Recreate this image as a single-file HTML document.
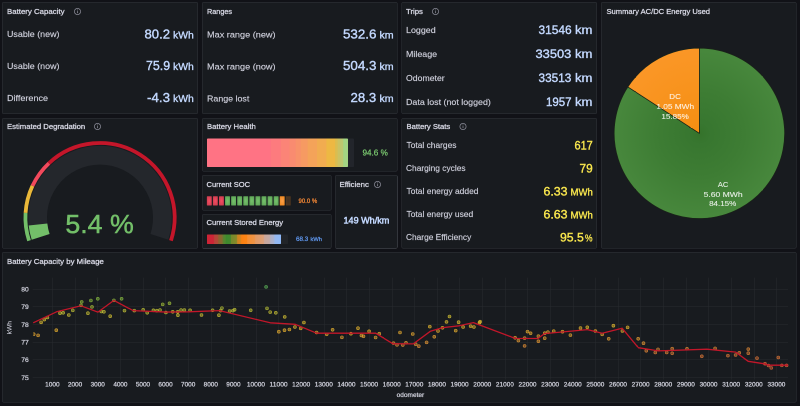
<!DOCTYPE html>
<html lang="en">
<head>
<meta charset="utf-8">
<title>Battery Health Dashboard</title>
<style>
*{box-sizing:border-box;margin:0;padding:0}
html,body{width:800px;height:406px;overflow:hidden;background:#111217}
body{position:relative;font-family:"Liberation Sans", sans-serif}
#stage{position:absolute;left:0;top:0;width:1600px;height:812px;overflow:hidden;transform:scale(0.5);transform-origin:0 0;will-change:transform}
main{position:absolute;left:0;top:0;width:800px;height:406px;zoom:2}
@supports not (zoom:2){main{transform:scale(2);transform-origin:0 0}}
.panel{position:absolute;background:#181b1f;border:0.5px solid #33363c;border-radius:1.5px}
.abs{position:absolute;display:block}
.t{position:absolute;white-space:nowrap;line-height:normal;font-weight:400;transform-origin:0 0;display:block}
.title{-webkit-text-stroke:0.32px currentColor}
.lab{-webkit-text-stroke:0.15px currentColor}
.val{-webkit-text-stroke:0.4px currentColor}
.val2{-webkit-text-stroke:0.5px currentColor}
.bv{-webkit-text-stroke:0.25px currentColor}
.unit{-webkit-text-stroke:0.35px currentColor}
.lcd i{position:absolute;top:196.4px;width:5px;height:9.4px;border-radius:0.5px;display:block}
svg text{font-family:"Liberation Sans", sans-serif}
</style>
</head>
<body>
<div id="stage">
<main>
<section class="panel" style="left:2px;top:2px;width:196px;height:112px"></section>
<h2 class="t title" style="left:7.02px;top:7.0px;font-size:7.7px;color:#d4d5e1;transform:scaleX(1.019)">Battery Capacity</h2>
<svg class="abs" style="left:72.30px;top:6.60px" width="10" height="10" viewBox="0 0 10 10"><circle cx="5" cy="5" r="3.1" fill="none" stroke="#888995" stroke-width="0.75"/><path d="M5 4.6V6.6" stroke="#888995" stroke-width="0.8" fill="none"/><circle cx="5" cy="3.5" r="0.45" fill="#888995"/></svg>

<span class="t lab" style="left:7.08px;top:29.0px;font-size:8.6px;color:#cfd0dc;transform:scaleX(1.037)">Usable (new)</span>

<span class="t val" style="left:144.46px;top:26.5px;font-size:13px;color:#c3d8fe;transform:scaleX(1.010)">80.2</span>

<span class="t unit" style="left:172.88px;top:29.0px;font-size:10.4px;color:#c3d8fe;transform:scaleX(0.998)">kWh</span>

<span class="t lab" style="left:7.08px;top:61.0px;font-size:8.6px;color:#cfd0dc;transform:scaleX(1.037)">Usable (now)</span>

<span class="t val" style="left:145.83px;top:58.0px;font-size:13px;color:#c3d8fe;transform:scaleX(0.952)">75.9</span>

<span class="t unit" style="left:172.88px;top:60.5px;font-size:10.4px;color:#c3d8fe;transform:scaleX(0.998)">kWh</span>

<span class="t lab" style="left:7.03px;top:93.0px;font-size:8.6px;color:#cfd0dc;transform:scaleX(1.051)">Difference</span>

<span class="t val" style="left:146.95px;top:90.0px;font-size:13px;color:#c3d8fe;transform:scaleX(1.026)">-4.3</span>

<span class="t unit" style="left:172.88px;top:92.5px;font-size:10.4px;color:#c3d8fe;transform:scaleX(0.998)">kWh</span>

<section class="panel" style="left:202px;top:2px;width:195.5px;height:112px"></section>
<h2 class="t title" style="left:207.07px;top:7.0px;font-size:7.7px;color:#d4d5e1;transform:scaleX(0.944)">Ranges</h2>

<span class="t lab" style="left:206.82px;top:29.5px;font-size:8.6px;color:#cfd0dc;transform:scaleX(1.063)">Max range (new)</span>

<span class="t val" style="left:342.82px;top:26.5px;font-size:13px;color:#c3d8fe;transform:scaleX(1.027)">532.6</span>

<span class="t unit" style="left:379.46px;top:29.5px;font-size:10.2px;color:#c3d8fe;transform:scaleX(1.041)">km</span>

<span class="t lab" style="left:206.82px;top:61.5px;font-size:8.6px;color:#cfd0dc;transform:scaleX(1.063)">Max range (now)</span>

<span class="t val" style="left:342.82px;top:58.0px;font-size:13px;color:#c3d8fe;transform:scaleX(1.027)">504.3</span>

<span class="t unit" style="left:379.46px;top:61.0px;font-size:10.2px;color:#c3d8fe;transform:scaleX(1.041)">km</span>

<span class="t lab" style="left:206.84px;top:93.5px;font-size:8.6px;color:#cfd0dc;transform:scaleX(1.030)">Range lost</span>

<span class="t val" style="left:350.49px;top:90.0px;font-size:13px;color:#c3d8fe;transform:scaleX(1.016)">28.3</span>

<span class="t unit" style="left:379.46px;top:93.0px;font-size:10.2px;color:#c3d8fe;transform:scaleX(1.041)">km</span>

<section class="panel" style="left:401.5px;top:2px;width:195.5px;height:112px"></section>
<h2 class="t title" style="left:406.20px;top:7.0px;font-size:7.7px;color:#d4d5e1;transform:scaleX(1.006)">Trips</h2>
<svg class="abs" style="left:430.70px;top:6.60px" width="10" height="10" viewBox="0 0 10 10"><circle cx="5" cy="5" r="3.1" fill="none" stroke="#888995" stroke-width="0.75"/><path d="M5 4.6V6.6" stroke="#888995" stroke-width="0.8" fill="none"/><circle cx="5" cy="3.5" r="0.45" fill="#888995"/></svg>

<span class="t lab" style="left:406.14px;top:25.0px;font-size:8.6px;color:#cfd0dc;transform:scaleX(1.035)">Logged</span>

<span class="t val" style="left:538.27px;top:23.0px;font-size:12.2px;color:#c3d8fe;transform:scaleX(0.978)">31546</span>

<span class="t unit" style="left:575.00px;top:23.0px;font-size:12.2px;color:#c3d8fe;transform:scaleX(1.075)">km</span>

<span class="t lab" style="left:406.14px;top:49.0px;font-size:8.6px;color:#cfd0dc;transform:scaleX(1.034)">Mileage</span>

<span class="t val" style="left:535.63px;top:47.0px;font-size:12.2px;color:#c3d8fe;transform:scaleX(1.056)">33503</span>

<span class="t unit" style="left:575.00px;top:47.0px;font-size:12.2px;color:#c3d8fe;transform:scaleX(1.075)">km</span>

<span class="t lab" style="left:405.96px;top:73.0px;font-size:8.6px;color:#cfd0dc;transform:scaleX(1.013)">Odometer</span>

<span class="t val" style="left:538.58px;top:71.0px;font-size:12.2px;color:#c3d8fe;transform:scaleX(0.968)">33513</span>

<span class="t unit" style="left:575.00px;top:71.0px;font-size:12.2px;color:#c3d8fe;transform:scaleX(1.075)">km</span>

<span class="t lab" style="left:406.14px;top:97.0px;font-size:8.6px;color:#cfd0dc;transform:scaleX(1.033)">Data lost (not logged)</span>

<span class="t val" style="left:545.99px;top:95.0px;font-size:12.2px;color:#c3d8fe;transform:scaleX(0.941)">1957</span>

<span class="t unit" style="left:575.00px;top:95.0px;font-size:12.2px;color:#c3d8fe;transform:scaleX(1.075)">km</span>

<section class="panel" style="left:401.5px;top:118px;width:195.5px;height:130.5px"></section>
<h2 class="t title" style="left:406.34px;top:122.0px;font-size:7.7px;color:#d4d5e1;transform:scaleX(0.993)">Battery Stats</h2>
<svg class="abs" style="left:457.80px;top:121.60px" width="10" height="10" viewBox="0 0 10 10"><circle cx="5" cy="5" r="3.1" fill="none" stroke="#888995" stroke-width="0.75"/><path d="M5 4.6V6.6" stroke="#888995" stroke-width="0.8" fill="none"/><circle cx="5" cy="3.5" r="0.45" fill="#888995"/></svg>

<span class="t lab" style="left:406.38px;top:140.0px;font-size:8.6px;color:#cfd0dc;transform:scaleX(0.978)">Total charges</span>

<span class="t val" style="left:574.50px;top:138.5px;font-size:12.0px;color:#f8e64e;transform:scaleX(0.911)">617</span>

<span class="t lab" style="left:406.23px;top:163.0px;font-size:8.6px;color:#cfd0dc;transform:scaleX(0.974)">Charging cycles</span>

<span class="t val" style="left:579.56px;top:161.5px;font-size:12.0px;color:#f8e64e;transform:scaleX(0.985)">79</span>

<span class="t lab" style="left:406.38px;top:186.0px;font-size:8.6px;color:#cfd0dc;transform:scaleX(0.985)">Total energy added</span>

<span class="t val" style="left:543.44px;top:184.5px;font-size:12.0px;color:#f8e64e;transform:scaleX(1.024)">6.33</span>

<span class="t unit" style="left:570.48px;top:186.5px;font-size:10.0px;color:#f8e64e;transform:scaleX(0.957)">MWh</span>

<span class="t lab" style="left:406.38px;top:209.0px;font-size:8.6px;color:#cfd0dc;transform:scaleX(0.983)">Total energy used</span>

<span class="t val" style="left:543.44px;top:207.5px;font-size:12.0px;color:#f8e64e;transform:scaleX(1.024)">6.63</span>

<span class="t unit" style="left:570.48px;top:209.5px;font-size:10.0px;color:#f8e64e;transform:scaleX(0.957)">MWh</span>

<span class="t lab" style="left:406.23px;top:232.0px;font-size:8.6px;color:#cfd0dc;transform:scaleX(0.971)">Charge Efficiency</span>

<span class="t val" style="left:559.90px;top:230.5px;font-size:12.0px;color:#f8e64e;transform:scaleX(1.017)">95.5</span>

<span class="t unit" style="left:584.76px;top:232.5px;font-size:10.0px;color:#f8e64e;transform:scaleX(0.841)">%</span>

<section class="panel" style="left:601px;top:2px;width:195.5px;height:246.5px"></section>
<h2 class="t title" style="left:606.31px;top:7.0px;font-size:7.7px;color:#d4d5e1;transform:scaleX(0.984)">Summary AC/DC Energy Used</h2>

<svg class="abs" style="left:601px;top:2px" width="196" height="247" viewBox="601 2 196 247" font-family='"Liberation Sans", sans-serif'>
<defs>
<radialGradient id="gAC" gradientUnits="userSpaceOnUse" cx="699.4" cy="133.3" r="85.2">
<stop offset="0" stop-color="#35732b"/><stop offset="0.12" stop-color="#387730"/><stop offset="0.5" stop-color="#3e7d34"/><stop offset="1" stop-color="#48883d"/></radialGradient>
<radialGradient id="gDC" gradientUnits="userSpaceOnUse" cx="699.4" cy="133.3" r="85.2">
<stop offset="0" stop-color="#f58f12"/><stop offset="1" stop-color="#fb9727"/></radialGradient>
</defs>
<path d="M699.4 133.3L699.4 48.10000000000001A85.2 85.2 0 1 1 627.90 86.97Z" fill="url(#gAC)" stroke="#1a2418" stroke-width="0.7" stroke-linejoin="round"/>
<path d="M699.4 133.3L627.90 86.97A85.2 85.2 0 0 1 699.4 48.10000000000001Z" fill="url(#gDC)" stroke="#1a2418" stroke-width="0.7" stroke-linejoin="round"/>
<g fill="#ffffff" fill-opacity="0.82" stroke="#ffffff" stroke-opacity="0.82" stroke-width="0.12">
<text x="669.31" y="99" font-size="7.4" textLength="11.55" lengthAdjust="spacingAndGlyphs">DC</text>
<text x="656.33" y="109" font-size="7.4" textLength="37.78" lengthAdjust="spacingAndGlyphs">1.05 MWh</text>
<text x="661.34" y="119" font-size="7.4" textLength="27.46" lengthAdjust="spacingAndGlyphs">15.85%</text>
<text x="717.95" y="187" font-size="7.4" textLength="10.39" lengthAdjust="spacingAndGlyphs">AC</text>
<text x="703.61" y="197" font-size="7.4" textLength="39.02" lengthAdjust="spacingAndGlyphs">5.60 MWh</text>
<text x="709.09" y="206" font-size="7.4" textLength="27.21" lengthAdjust="spacingAndGlyphs">84.15%</text>
</g>
</svg>

<section class="panel" style="left:2px;top:118px;width:196px;height:130.5px"></section>
<h2 class="t title" style="left:7.04px;top:122.0px;font-size:7.7px;color:#d4d5e1;transform:scaleX(0.998)">Estimated Degradation</h2>
<svg class="abs" style="left:92.70px;top:121.60px" width="10" height="10" viewBox="0 0 10 10"><circle cx="5" cy="5" r="3.1" fill="none" stroke="#888995" stroke-width="0.75"/><path d="M5 4.6V6.6" stroke="#888995" stroke-width="0.8" fill="none"/><circle cx="5" cy="3.5" r="0.45" fill="#888995"/></svg>

<svg class="abs" style="left:2px;top:118px" width="196" height="131" viewBox="2 118 196 131" font-family='"Liberation Sans", sans-serif'>
<path d="M40.65 236.88A62.4 62.4 0 1 1 159.35 236.88" fill="none" stroke="#24272c" stroke-width="18.8"/>
<path d="M40.65 236.88A62.4 62.4 0 0 1 37.98 224.49" fill="none" stroke="#73bf69" stroke-width="18.8"/>
<path d="M29.05 240.65A74.6 74.6 0 0 1 25.55 212.92" fill="none" stroke="#73bf69" stroke-width="3.8"/>
<path d="M25.55 212.92A74.6 74.6 0 0 1 32.50 185.84" fill="none" stroke="#eab839" stroke-width="3.8"/>
<path d="M32.50 185.84A74.6 74.6 0 0 1 48.93 163.22" fill="none" stroke="#f2495c" stroke-width="3.8"/>
<path d="M48.93 163.22A74.6 74.6 0 0 1 170.95 240.65" fill="none" stroke="#c4162a" stroke-width="3.8"/>
<text x="65.38" y="233" font-size="26.3" textLength="68.33" lengthAdjust="spacingAndGlyphs" fill="#73bf69" stroke="#73bf69" stroke-width="0.5">5.4 %</text>
</svg>
<section class="panel" style="left:202px;top:118px;width:195.5px;height:53.5px"></section>
<h2 class="t title" style="left:207.03px;top:122.0px;font-size:7.7px;color:#d4d5e1;transform:scaleX(1.000)">Battery Health</h2>

<div class="abs" style="left:206.9px;top:138.7px;width:147.2px;height:28.4px;background:#22252b;border-radius:0.8px"></div>
<div class="abs" style="left:206.9px;top:138.7px;width:141.2px;height:28.4px;border-radius:0.8px;background:linear-gradient(90deg,#ff7384 0px,#ff7384 63.45px,#fd7b7e 63.95px,#fd7b7e 73.45px,#fb8477 73.95px,#fb8477 82.25px,#f98b70 82.75px,#f98b70 88.45px,#f8926a 88.95px,#f8926a 93.45px,#f69a62 93.95px,#f69a62 100.35px,#f4a359 100.85px,#f4a359 109.75px,#f1ac50 110.25px,#f1ac50 119.15px,#edb843 119.65px,#edb843 127.85px,#dabd50 128.35px,#dabd50 130.35px,#cbc262 130.85px,#cbc262 132.85px,#bdc870 133.35px,#bdc870 135.95px,#a3d583 136.45px,#a3d583 140.95px)"></div>
<span class="t bv" style="left:362.58px;top:147.5px;font-size:8.6px;color:#7bc970;transform:scaleX(0.946)">94.6 %</span>
<section class="panel" style="left:202px;top:175px;width:129.5px;height:35.5px"></section>
<h2 class="t title" style="left:206.67px;top:180.0px;font-size:7.7px;color:#d4d5e1;transform:scaleX(0.979)">Current SOC</h2>

<svg class="abs" style="left:202px;top:190px" width="129" height="20" viewBox="202 190 129 20"><defs><radialGradient id="lr" gradientUnits="objectBoundingBox" cx="0.5" cy="0.5" r="0.72"><stop offset="0" stop-color="#f44d62"/><stop offset="1" stop-color="#c53b4c"/></radialGradient><radialGradient id="lg" gradientUnits="objectBoundingBox" cx="0.5" cy="0.5" r="0.72"><stop offset="0" stop-color="#76c26c"/><stop offset="1" stop-color="#5aa053"/></radialGradient><radialGradient id="lo" gradientUnits="objectBoundingBox" cx="0.5" cy="0.5" r="0.72"><stop offset="0" stop-color="#fca04a"/><stop offset="1" stop-color="#ec8418"/></radialGradient><radialGradient id="ld" gradientUnits="objectBoundingBox" cx="0.5" cy="0.5" r="0.72"><stop offset="0" stop-color="#3e2f23"/><stop offset="1" stop-color="#54391e"/></radialGradient></defs><rect x="206.85" y="196.3" width="4.9" height="9.2" rx="0.5" fill="url(#lr)"/><rect x="212.92" y="196.3" width="4.9" height="9.2" rx="0.5" fill="url(#lr)"/><rect x="219.00" y="196.3" width="4.9" height="9.2" rx="0.5" fill="url(#lr)"/><rect x="225.07" y="196.3" width="4.9" height="9.2" rx="0.5" fill="url(#lg)"/><rect x="231.15" y="196.3" width="4.9" height="9.2" rx="0.5" fill="url(#lg)"/><rect x="237.22" y="196.3" width="4.9" height="9.2" rx="0.5" fill="url(#lg)"/><rect x="243.30" y="196.3" width="4.9" height="9.2" rx="0.5" fill="url(#lg)"/><rect x="249.38" y="196.3" width="4.9" height="9.2" rx="0.5" fill="url(#lg)"/><rect x="255.45" y="196.3" width="4.9" height="9.2" rx="0.5" fill="url(#lg)"/><rect x="261.52" y="196.3" width="4.9" height="9.2" rx="0.5" fill="url(#lg)"/><rect x="267.60" y="196.3" width="4.9" height="9.2" rx="0.5" fill="url(#lg)"/><rect x="273.68" y="196.3" width="4.9" height="9.2" rx="0.5" fill="url(#lg)"/><rect x="279.75" y="196.3" width="4.9" height="9.2" rx="0.5" fill="url(#lo)"/><rect x="285.82" y="196.3" width="4.9" height="9.2" rx="0.5" fill="url(#ld)"/></svg>
<span class="t bv" style="left:298.28px;top:197.0px;font-size:6.6px;color:#f88a36;transform:scaleX(0.911)">90.0 %</span>
<section class="panel" style="left:202px;top:214px;width:129.5px;height:34.5px"></section>
<h2 class="t title" style="left:206.67px;top:218.0px;font-size:7.7px;color:#d4d5e1;transform:scaleX(0.995)">Current Stored Energy</h2>

<div class="abs" style="left:206.9px;top:234.7px;width:81px;height:9.1px;background:#212428;border-radius:0.6px"></div>
<div class="abs" style="left:206.9px;top:234.7px;width:74.1px;height:9.1px;border-radius:0.6px;background:linear-gradient(90deg,#cf2436 0px,#cc2636 6.6px,#b8433a 7.4px,#b04a38 10.8px,#8f6431 11.6px,#866b30 15.2px,#5e8030 16px,#4d8a2f 18.4px,#3d892e 19px,#43892e 23.6px,#748a2c 24.2px,#878a2a 29.6px,#c88524 30.4px,#dc841d 33.8px,#fb8112 34.6px,#fd8517 39.8px,#f68f33 40.6px,#ee9446 47.6px,#e39a62 48.4px,#dca07a 56.6px,#cba79a 57.4px,#c3aaa6 62.6px,#b1b0c4 63.4px,#a9b3d2 67px,#96b8ee 67.8px,#8fbaf9 74.1px)"></div>
<span class="t bv" style="left:296.13px;top:235.0px;font-size:6.6px;color:#6199f0;transform:scaleX(0.956)">68.3</span>
<span class="t bv" style="left:310.28px;top:236.0px;font-size:5.6px;color:#6199f0;transform:scaleX(1.022)">kWh</span>
<section class="panel" style="left:335px;top:175px;width:62.5px;height:73.5px"></section>
<h2 class="t title" style="left:339.72px;top:180.0px;font-size:7.7px;color:#d4d5e1;transform:scaleX(1.016)">Efficienc</h2>
<svg class="abs" style="left:372.50px;top:179.60px" width="10" height="10" viewBox="0 0 10 10"><circle cx="5" cy="5" r="3.1" fill="none" stroke="#888995" stroke-width="0.75"/><path d="M5 4.6V6.6" stroke="#888995" stroke-width="0.8" fill="none"/><circle cx="5" cy="3.5" r="0.45" fill="#888995"/></svg>

<span class="t val2" style="left:343.67px;top:215.5px;font-size:8.8px;color:#c3d8fe;transform:scaleX(1.030)">149 Wh/km</span>
<section class="panel" style="left:2px;top:252px;width:794.5px;height:150.5px"></section>
<h2 class="t title" style="left:7.03px;top:257.0px;font-size:7.7px;color:#d4d5e1;transform:scaleX(1.011)">Battery Capacity by Mileage</h2>

<svg class="abs" style="left:2px;top:252px" width="795" height="151" viewBox="2 252 795 151" font-family='"Liberation Sans", sans-serif'>
<defs><clipPath id="plot"><rect x="33.300000000000004" y="273.6" width="756.1999999999999" height="107.89999999999998"/></clipPath></defs>
<g stroke="#292c31" stroke-width="0.5" fill="none">
<path d="M52.75 277.6V379.3"/>
<path d="M75.25 277.6V379.3"/>
<path d="M97.75 277.6V379.3"/>
<path d="M120.75 277.6V379.3"/>
<path d="M143.25 277.6V379.3"/>
<path d="M165.75 277.6V379.3"/>
<path d="M188.25 277.6V379.3"/>
<path d="M211.25 277.6V379.3"/>
<path d="M233.75 277.6V379.3"/>
<path d="M256.25 277.6V379.3" stroke-opacity="0.5"/>
<path d="M278.75 277.6V379.3"/>
<path d="M301.75 277.6V379.3"/>
<path d="M324.25 277.6V379.3"/>
<path d="M346.75 277.6V379.3"/>
<path d="M369.25 277.6V379.3"/>
<path d="M392.25 277.6V379.3"/>
<path d="M414.75 277.6V379.3"/>
<path d="M437.25 277.6V379.3"/>
<path d="M459.75 277.6V379.3"/>
<path d="M482.75 277.6V379.3"/>
<path d="M505.25 277.6V379.3"/>
<path d="M527.75 277.6V379.3"/>
<path d="M550.25 277.6V379.3"/>
<path d="M573.25 277.6V379.3"/>
<path d="M595.75 277.6V379.3"/>
<path d="M618.25 277.6V379.3"/>
<path d="M640.75 277.6V379.3"/>
<path d="M663.75 277.6V379.3"/>
<path d="M686.25 277.6V379.3"/>
<path d="M708.75 277.6V379.3"/>
<path d="M731.25 277.6V379.3"/>
<path d="M754.25 277.6V379.3"/>
<path d="M776.75 277.6V379.3"/>
<path d="M32.6 377.75H788.0"/>
<path d="M32.6 359.75H788.0"/>
<path d="M32.6 342.25H788.0"/>
<path d="M32.6 324.75H788.0"/>
<path d="M32.6 306.75H788.0"/>
<path d="M32.6 289.25H788.0"/>
</g>
<g fill="#d0d1dc" stroke="#d0d1dc" stroke-width="0.24">
<text x="21.21" y="380.0" font-size="6.3" textLength="7.52" lengthAdjust="spacingAndGlyphs">75</text>
<text x="21.21" y="362.0" font-size="6.3" textLength="7.52" lengthAdjust="spacingAndGlyphs">76</text>
<text x="21.21" y="344.5" font-size="6.3" textLength="7.60" lengthAdjust="spacingAndGlyphs">77</text>
<text x="21.21" y="327.0" font-size="6.3" textLength="7.52" lengthAdjust="spacingAndGlyphs">78</text>
<text x="21.21" y="309.0" font-size="6.3" textLength="7.56" lengthAdjust="spacingAndGlyphs">79</text>
<text x="21.25" y="291.5" font-size="6.3" textLength="7.45" lengthAdjust="spacingAndGlyphs">80</text>
<text x="45.10" y="386.5" font-size="6.3" textLength="14.52" lengthAdjust="spacingAndGlyphs">1000</text>
<text x="67.89" y="386.5" font-size="6.3" textLength="14.35" lengthAdjust="spacingAndGlyphs">2000</text>
<text x="90.58" y="386.5" font-size="6.3" textLength="14.28" lengthAdjust="spacingAndGlyphs">3000</text>
<text x="113.33" y="386.5" font-size="6.3" textLength="14.15" lengthAdjust="spacingAndGlyphs">4000</text>
<text x="135.83" y="386.5" font-size="6.3" textLength="14.28" lengthAdjust="spacingAndGlyphs">5000</text>
<text x="158.39" y="386.5" font-size="6.3" textLength="14.35" lengthAdjust="spacingAndGlyphs">6000</text>
<text x="181.01" y="386.5" font-size="6.3" textLength="14.35" lengthAdjust="spacingAndGlyphs">7000</text>
<text x="203.66" y="386.5" font-size="6.3" textLength="14.31" lengthAdjust="spacingAndGlyphs">8000</text>
<text x="226.29" y="386.5" font-size="6.3" textLength="14.31" lengthAdjust="spacingAndGlyphs">9000</text>
<text x="246.91" y="386.5" font-size="6.3" textLength="18.12" lengthAdjust="spacingAndGlyphs">10000</text>
<text x="269.52" y="386.5" font-size="6.3" textLength="18.15" lengthAdjust="spacingAndGlyphs">11000</text>
<text x="292.16" y="386.5" font-size="6.3" textLength="18.12" lengthAdjust="spacingAndGlyphs">12000</text>
<text x="314.78" y="386.5" font-size="6.3" textLength="18.12" lengthAdjust="spacingAndGlyphs">13000</text>
<text x="337.40" y="386.5" font-size="6.3" textLength="18.12" lengthAdjust="spacingAndGlyphs">14000</text>
<text x="360.03" y="386.5" font-size="6.3" textLength="18.12" lengthAdjust="spacingAndGlyphs">15000</text>
<text x="382.65" y="386.5" font-size="6.3" textLength="18.12" lengthAdjust="spacingAndGlyphs">16000</text>
<text x="405.27" y="386.5" font-size="6.3" textLength="18.12" lengthAdjust="spacingAndGlyphs">17000</text>
<text x="427.90" y="386.5" font-size="6.3" textLength="18.12" lengthAdjust="spacingAndGlyphs">18000</text>
<text x="450.52" y="386.5" font-size="6.3" textLength="18.12" lengthAdjust="spacingAndGlyphs">19000</text>
<text x="473.31" y="386.5" font-size="6.3" textLength="17.95" lengthAdjust="spacingAndGlyphs">20000</text>
<text x="495.93" y="386.5" font-size="6.3" textLength="17.95" lengthAdjust="spacingAndGlyphs">21000</text>
<text x="518.55" y="386.5" font-size="6.3" textLength="17.95" lengthAdjust="spacingAndGlyphs">22000</text>
<text x="541.18" y="386.5" font-size="6.3" textLength="17.95" lengthAdjust="spacingAndGlyphs">23000</text>
<text x="563.80" y="386.5" font-size="6.3" textLength="17.95" lengthAdjust="spacingAndGlyphs">24000</text>
<text x="586.42" y="386.5" font-size="6.3" textLength="17.95" lengthAdjust="spacingAndGlyphs">25000</text>
<text x="609.05" y="386.5" font-size="6.3" textLength="17.95" lengthAdjust="spacingAndGlyphs">26000</text>
<text x="631.67" y="386.5" font-size="6.3" textLength="17.95" lengthAdjust="spacingAndGlyphs">27000</text>
<text x="654.29" y="386.5" font-size="6.3" textLength="17.95" lengthAdjust="spacingAndGlyphs">28000</text>
<text x="676.91" y="386.5" font-size="6.3" textLength="17.95" lengthAdjust="spacingAndGlyphs">29000</text>
<text x="699.60" y="386.5" font-size="6.3" textLength="17.89" lengthAdjust="spacingAndGlyphs">30000</text>
<text x="722.23" y="386.5" font-size="6.3" textLength="17.89" lengthAdjust="spacingAndGlyphs">31000</text>
<text x="744.85" y="386.5" font-size="6.3" textLength="17.89" lengthAdjust="spacingAndGlyphs">32000</text>
<text x="767.47" y="386.5" font-size="6.3" textLength="17.89" lengthAdjust="spacingAndGlyphs">33000</text>
<text x="396.69" y="397" font-size="6.4" textLength="27.49" lengthAdjust="spacingAndGlyphs">odometer</text>
<text transform="translate(11.6 334.38) rotate(-90)" font-size="6.1" stroke-width="0.08" textLength="13.37" lengthAdjust="spacingAndGlyphs">kWh</text>
</g>
<g clip-path="url(#plot)">
<circle cx="33.7" cy="334.2" r="1.5" fill="rgb(227,166,49)" fill-opacity="0.5" stroke="rgb(227,166,49)" stroke-opacity="0.9" stroke-width="0.55"/>
<circle cx="38.1" cy="335.4" r="1.5" fill="rgb(227,163,50)" fill-opacity="0.5" stroke="rgb(227,163,50)" stroke-opacity="0.9" stroke-width="0.55"/>
<circle cx="41.1" cy="322.4" r="1.5" fill="rgb(223,189,49)" fill-opacity="0.5" stroke="rgb(223,189,49)" stroke-opacity="0.9" stroke-width="0.55"/>
<circle cx="44.3" cy="319.6" r="1.5" fill="rgb(217,191,49)" fill-opacity="0.5" stroke="rgb(217,191,49)" stroke-opacity="0.9" stroke-width="0.55"/>
<circle cx="47.4" cy="317.5" r="1.5" fill="rgb(212,192,50)" fill-opacity="0.5" stroke="rgb(212,192,50)" stroke-opacity="0.9" stroke-width="0.55"/>
<circle cx="56.3" cy="330.2" r="1.5" fill="rgb(228,174,48)" fill-opacity="0.5" stroke="rgb(228,174,48)" stroke-opacity="0.9" stroke-width="0.55"/>
<circle cx="60" cy="313.2" r="1.5" fill="rgb(199,191,53)" fill-opacity="0.5" stroke="rgb(199,191,53)" stroke-opacity="0.9" stroke-width="0.55"/>
<circle cx="63.2" cy="312.8" r="1.5" fill="rgb(198,191,53)" fill-opacity="0.5" stroke="rgb(198,191,53)" stroke-opacity="0.9" stroke-width="0.55"/>
<circle cx="68.8" cy="315" r="1.5" fill="rgb(205,191,52)" fill-opacity="0.5" stroke="rgb(205,191,52)" stroke-opacity="0.9" stroke-width="0.55"/>
<circle cx="72.8" cy="310.4" r="1.5" fill="rgb(189,190,54)" fill-opacity="0.5" stroke="rgb(189,190,54)" stroke-opacity="0.9" stroke-width="0.55"/>
<circle cx="81" cy="305.4" r="1.5" fill="rgb(165,188,57)" fill-opacity="0.5" stroke="rgb(165,188,57)" stroke-opacity="0.9" stroke-width="0.55"/>
<circle cx="81.7" cy="301.9" r="1.5" fill="rgb(147,187,60)" fill-opacity="0.5" stroke="rgb(147,187,60)" stroke-opacity="0.9" stroke-width="0.55"/>
<circle cx="87.9" cy="313.2" r="1.5" fill="rgb(199,191,53)" fill-opacity="0.5" stroke="rgb(199,191,53)" stroke-opacity="0.9" stroke-width="0.55"/>
<circle cx="90.9" cy="300.5" r="1.5" fill="rgb(140,186,62)" fill-opacity="0.5" stroke="rgb(140,186,62)" stroke-opacity="0.9" stroke-width="0.55"/>
<circle cx="92" cy="306.9" r="1.5" fill="rgb(172,188,56)" fill-opacity="0.5" stroke="rgb(172,188,56)" stroke-opacity="0.9" stroke-width="0.55"/>
<circle cx="97.8" cy="298.8" r="1.5" fill="rgb(134,186,65)" fill-opacity="0.5" stroke="rgb(134,186,65)" stroke-opacity="0.9" stroke-width="0.55"/>
<circle cx="101.3" cy="311.5" r="1.5" fill="rgb(194,190,54)" fill-opacity="0.5" stroke="rgb(194,190,54)" stroke-opacity="0.9" stroke-width="0.55"/>
<circle cx="103.9" cy="311.8" r="1.5" fill="rgb(195,190,54)" fill-opacity="0.5" stroke="rgb(195,190,54)" stroke-opacity="0.9" stroke-width="0.55"/>
<circle cx="110.2" cy="316.2" r="1.5" fill="rgb(208,191,51)" fill-opacity="0.5" stroke="rgb(208,191,51)" stroke-opacity="0.9" stroke-width="0.55"/>
<circle cx="113.9" cy="300.4" r="1.5" fill="rgb(140,186,62)" fill-opacity="0.5" stroke="rgb(140,186,62)" stroke-opacity="0.9" stroke-width="0.55"/>
<circle cx="121.6" cy="298.8" r="1.5" fill="rgb(134,186,65)" fill-opacity="0.5" stroke="rgb(134,186,65)" stroke-opacity="0.9" stroke-width="0.55"/>
<circle cx="124.5" cy="310.6" r="1.5" fill="rgb(190,190,54)" fill-opacity="0.5" stroke="rgb(190,190,54)" stroke-opacity="0.9" stroke-width="0.55"/>
<circle cx="134.3" cy="310.6" r="1.5" fill="rgb(190,190,54)" fill-opacity="0.5" stroke="rgb(190,190,54)" stroke-opacity="0.9" stroke-width="0.55"/>
<circle cx="143.2" cy="309.8" r="1.5" fill="rgb(186,190,54)" fill-opacity="0.5" stroke="rgb(186,190,54)" stroke-opacity="0.9" stroke-width="0.55"/>
<circle cx="147.2" cy="312.8" r="1.5" fill="rgb(198,191,53)" fill-opacity="0.5" stroke="rgb(198,191,53)" stroke-opacity="0.9" stroke-width="0.55"/>
<circle cx="153.4" cy="310.3" r="1.5" fill="rgb(189,190,54)" fill-opacity="0.5" stroke="rgb(189,190,54)" stroke-opacity="0.9" stroke-width="0.55"/>
<circle cx="156.8" cy="310.7" r="1.5" fill="rgb(191,190,54)" fill-opacity="0.5" stroke="rgb(191,190,54)" stroke-opacity="0.9" stroke-width="0.55"/>
<circle cx="160" cy="310" r="1.5" fill="rgb(187,190,54)" fill-opacity="0.5" stroke="rgb(187,190,54)" stroke-opacity="0.9" stroke-width="0.55"/>
<circle cx="162.7" cy="304.4" r="1.5" fill="rgb(160,187,58)" fill-opacity="0.5" stroke="rgb(160,187,58)" stroke-opacity="0.9" stroke-width="0.55"/>
<circle cx="165.9" cy="312.5" r="1.5" fill="rgb(197,190,53)" fill-opacity="0.5" stroke="rgb(197,190,53)" stroke-opacity="0.9" stroke-width="0.55"/>
<circle cx="169.5" cy="303.3" r="1.5" fill="rgb(155,187,59)" fill-opacity="0.5" stroke="rgb(155,187,59)" stroke-opacity="0.9" stroke-width="0.55"/>
<circle cx="172.7" cy="311.8" r="1.5" fill="rgb(195,190,54)" fill-opacity="0.5" stroke="rgb(195,190,54)" stroke-opacity="0.9" stroke-width="0.55"/>
<circle cx="177.7" cy="311.8" r="1.5" fill="rgb(195,190,54)" fill-opacity="0.5" stroke="rgb(195,190,54)" stroke-opacity="0.9" stroke-width="0.55"/>
<circle cx="177.9" cy="315.2" r="1.5" fill="rgb(205,191,52)" fill-opacity="0.5" stroke="rgb(205,191,52)" stroke-opacity="0.9" stroke-width="0.55"/>
<circle cx="181.1" cy="310" r="1.5" fill="rgb(187,190,54)" fill-opacity="0.5" stroke="rgb(187,190,54)" stroke-opacity="0.9" stroke-width="0.55"/>
<circle cx="184.4" cy="310" r="1.5" fill="rgb(187,190,54)" fill-opacity="0.5" stroke="rgb(187,190,54)" stroke-opacity="0.9" stroke-width="0.55"/>
<circle cx="190.1" cy="310.3" r="1.5" fill="rgb(189,190,54)" fill-opacity="0.5" stroke="rgb(189,190,54)" stroke-opacity="0.9" stroke-width="0.55"/>
<circle cx="201.5" cy="315" r="1.5" fill="rgb(205,191,52)" fill-opacity="0.5" stroke="rgb(205,191,52)" stroke-opacity="0.9" stroke-width="0.55"/>
<circle cx="212.6" cy="310.3" r="1.5" fill="rgb(189,190,54)" fill-opacity="0.5" stroke="rgb(189,190,54)" stroke-opacity="0.9" stroke-width="0.55"/>
<circle cx="218.9" cy="315.2" r="1.5" fill="rgb(205,191,52)" fill-opacity="0.5" stroke="rgb(205,191,52)" stroke-opacity="0.9" stroke-width="0.55"/>
<circle cx="220.6" cy="310.6" r="1.5" fill="rgb(190,190,54)" fill-opacity="0.5" stroke="rgb(190,190,54)" stroke-opacity="0.9" stroke-width="0.55"/>
<circle cx="221.9" cy="308.1" r="1.5" fill="rgb(178,189,55)" fill-opacity="0.5" stroke="rgb(178,189,55)" stroke-opacity="0.9" stroke-width="0.55"/>
<circle cx="229.6" cy="311" r="1.5" fill="rgb(192,190,54)" fill-opacity="0.5" stroke="rgb(192,190,54)" stroke-opacity="0.9" stroke-width="0.55"/>
<circle cx="232.9" cy="310.6" r="1.5" fill="rgb(190,190,54)" fill-opacity="0.5" stroke="rgb(190,190,54)" stroke-opacity="0.9" stroke-width="0.55"/>
<circle cx="234.6" cy="309.7" r="1.5" fill="rgb(186,189,55)" fill-opacity="0.5" stroke="rgb(186,189,55)" stroke-opacity="0.9" stroke-width="0.55"/>
<circle cx="250.7" cy="310.3" r="1.5" fill="rgb(189,190,54)" fill-opacity="0.5" stroke="rgb(189,190,54)" stroke-opacity="0.9" stroke-width="0.55"/>
<circle cx="266.1" cy="286.9" r="1.5" fill="rgb(93,181,90)" fill-opacity="0.5" stroke="rgb(93,181,90)" stroke-opacity="0.9" stroke-width="0.55"/>
<circle cx="267" cy="308.4" r="1.5" fill="rgb(180,189,55)" fill-opacity="0.5" stroke="rgb(180,189,55)" stroke-opacity="0.9" stroke-width="0.55"/>
<circle cx="270.2" cy="312.1" r="1.5" fill="rgb(195,190,53)" fill-opacity="0.5" stroke="rgb(195,190,53)" stroke-opacity="0.9" stroke-width="0.55"/>
<circle cx="275.8" cy="312.8" r="1.5" fill="rgb(198,191,53)" fill-opacity="0.5" stroke="rgb(198,191,53)" stroke-opacity="0.9" stroke-width="0.55"/>
<circle cx="284.7" cy="316.9" r="1.5" fill="rgb(211,192,51)" fill-opacity="0.5" stroke="rgb(211,192,51)" stroke-opacity="0.9" stroke-width="0.55"/>
<circle cx="278.8" cy="331.7" r="1.5" fill="rgb(228,171,48)" fill-opacity="0.5" stroke="rgb(228,171,48)" stroke-opacity="0.9" stroke-width="0.55"/>
<circle cx="284.5" cy="330.2" r="1.5" fill="rgb(228,174,48)" fill-opacity="0.5" stroke="rgb(228,174,48)" stroke-opacity="0.9" stroke-width="0.55"/>
<circle cx="289.4" cy="329.5" r="1.5" fill="rgb(227,176,48)" fill-opacity="0.5" stroke="rgb(227,176,48)" stroke-opacity="0.9" stroke-width="0.55"/>
<circle cx="294.9" cy="327" r="1.5" fill="rgb(227,181,48)" fill-opacity="0.5" stroke="rgb(227,181,48)" stroke-opacity="0.9" stroke-width="0.55"/>
<circle cx="300.7" cy="328.4" r="1.5" fill="rgb(227,178,48)" fill-opacity="0.5" stroke="rgb(227,178,48)" stroke-opacity="0.9" stroke-width="0.55"/>
<circle cx="303.9" cy="322.5" r="1.5" fill="rgb(223,189,48)" fill-opacity="0.5" stroke="rgb(223,189,48)" stroke-opacity="0.9" stroke-width="0.55"/>
<circle cx="316.6" cy="332.5" r="1.5" fill="rgb(228,169,48)" fill-opacity="0.5" stroke="rgb(228,169,48)" stroke-opacity="0.9" stroke-width="0.55"/>
<circle cx="326.7" cy="334.3" r="1.5" fill="rgb(227,165,49)" fill-opacity="0.5" stroke="rgb(227,165,49)" stroke-opacity="0.9" stroke-width="0.55"/>
<circle cx="332.6" cy="329.8" r="1.5" fill="rgb(227,175,48)" fill-opacity="0.5" stroke="rgb(227,175,48)" stroke-opacity="0.9" stroke-width="0.55"/>
<circle cx="341.9" cy="337.4" r="1.5" fill="rgb(227,159,51)" fill-opacity="0.5" stroke="rgb(227,159,51)" stroke-opacity="0.9" stroke-width="0.55"/>
<circle cx="350.9" cy="333.7" r="1.5" fill="rgb(228,167,49)" fill-opacity="0.5" stroke="rgb(228,167,49)" stroke-opacity="0.9" stroke-width="0.55"/>
<circle cx="358" cy="328.2" r="1.5" fill="rgb(227,179,48)" fill-opacity="0.5" stroke="rgb(227,179,48)" stroke-opacity="0.9" stroke-width="0.55"/>
<circle cx="361.4" cy="335.5" r="1.5" fill="rgb(227,163,50)" fill-opacity="0.5" stroke="rgb(227,163,50)" stroke-opacity="0.9" stroke-width="0.55"/>
<circle cx="363.5" cy="336.3" r="1.5" fill="rgb(227,161,50)" fill-opacity="0.5" stroke="rgb(227,161,50)" stroke-opacity="0.9" stroke-width="0.55"/>
<circle cx="369.1" cy="331.3" r="1.5" fill="rgb(228,172,48)" fill-opacity="0.5" stroke="rgb(228,172,48)" stroke-opacity="0.9" stroke-width="0.55"/>
<circle cx="375.6" cy="337.5" r="1.5" fill="rgb(227,159,51)" fill-opacity="0.5" stroke="rgb(227,159,51)" stroke-opacity="0.9" stroke-width="0.55"/>
<circle cx="379.3" cy="333.7" r="1.5" fill="rgb(228,167,49)" fill-opacity="0.5" stroke="rgb(228,167,49)" stroke-opacity="0.9" stroke-width="0.55"/>
<circle cx="393.5" cy="343.1" r="1.5" fill="rgb(225,148,53)" fill-opacity="0.5" stroke="rgb(225,148,53)" stroke-opacity="0.9" stroke-width="0.55"/>
<circle cx="397" cy="344.9" r="1.5" fill="rgb(225,144,53)" fill-opacity="0.5" stroke="rgb(225,144,53)" stroke-opacity="0.9" stroke-width="0.55"/>
<circle cx="400" cy="332.5" r="1.5" fill="rgb(228,169,48)" fill-opacity="0.5" stroke="rgb(228,169,48)" stroke-opacity="0.9" stroke-width="0.55"/>
<circle cx="402.8" cy="345.05" r="1.5" fill="rgb(225,144,53)" fill-opacity="0.5" stroke="rgb(225,144,53)" stroke-opacity="0.9" stroke-width="0.55"/>
<circle cx="406" cy="342.8" r="1.5" fill="rgb(225,148,53)" fill-opacity="0.5" stroke="rgb(225,148,53)" stroke-opacity="0.9" stroke-width="0.55"/>
<circle cx="412.7" cy="334" r="1.5" fill="rgb(228,166,49)" fill-opacity="0.5" stroke="rgb(228,166,49)" stroke-opacity="0.9" stroke-width="0.55"/>
<circle cx="415.7" cy="344.3" r="1.5" fill="rgb(225,145,53)" fill-opacity="0.5" stroke="rgb(225,145,53)" stroke-opacity="0.9" stroke-width="0.55"/>
<circle cx="418.8" cy="346.2" r="1.5" fill="rgb(224,142,54)" fill-opacity="0.5" stroke="rgb(224,142,54)" stroke-opacity="0.9" stroke-width="0.55"/>
<circle cx="426.6" cy="342.4" r="1.5" fill="rgb(225,149,53)" fill-opacity="0.5" stroke="rgb(225,149,53)" stroke-opacity="0.9" stroke-width="0.55"/>
<circle cx="429.8" cy="326.6" r="1.5" fill="rgb(227,182,48)" fill-opacity="0.5" stroke="rgb(227,182,48)" stroke-opacity="0.9" stroke-width="0.55"/>
<circle cx="434.3" cy="336.8" r="1.5" fill="rgb(227,160,50)" fill-opacity="0.5" stroke="rgb(227,160,50)" stroke-opacity="0.9" stroke-width="0.55"/>
<circle cx="438" cy="331" r="1.5" fill="rgb(228,172,48)" fill-opacity="0.5" stroke="rgb(228,172,48)" stroke-opacity="0.9" stroke-width="0.55"/>
<circle cx="442.5" cy="327.8" r="1.5" fill="rgb(227,179,48)" fill-opacity="0.5" stroke="rgb(227,179,48)" stroke-opacity="0.9" stroke-width="0.55"/>
<circle cx="446.5" cy="321.9" r="1.5" fill="rgb(222,189,49)" fill-opacity="0.5" stroke="rgb(222,189,49)" stroke-opacity="0.9" stroke-width="0.55"/>
<circle cx="449.5" cy="316.5" r="1.5" fill="rgb(209,192,51)" fill-opacity="0.5" stroke="rgb(209,192,51)" stroke-opacity="0.9" stroke-width="0.55"/>
<circle cx="455.7" cy="330.6" r="1.5" fill="rgb(228,173,48)" fill-opacity="0.5" stroke="rgb(228,173,48)" stroke-opacity="0.9" stroke-width="0.55"/>
<circle cx="458.6" cy="322.2" r="1.5" fill="rgb(222,189,49)" fill-opacity="0.5" stroke="rgb(222,189,49)" stroke-opacity="0.9" stroke-width="0.55"/>
<circle cx="463.1" cy="327" r="1.5" fill="rgb(227,181,48)" fill-opacity="0.5" stroke="rgb(227,181,48)" stroke-opacity="0.9" stroke-width="0.55"/>
<circle cx="470.6" cy="326.1" r="1.5" fill="rgb(227,183,48)" fill-opacity="0.5" stroke="rgb(227,183,48)" stroke-opacity="0.9" stroke-width="0.55"/>
<circle cx="473.9" cy="327" r="1.5" fill="rgb(227,181,48)" fill-opacity="0.5" stroke="rgb(227,181,48)" stroke-opacity="0.9" stroke-width="0.55"/>
<circle cx="479.5" cy="322.6" r="1.5" fill="rgb(223,189,48)" fill-opacity="0.5" stroke="rgb(223,189,48)" stroke-opacity="0.9" stroke-width="0.55"/>
<circle cx="480.1" cy="321.7" r="1.5" fill="rgb(221,190,49)" fill-opacity="0.5" stroke="rgb(221,190,49)" stroke-opacity="0.9" stroke-width="0.55"/>
<circle cx="515.1" cy="337.8" r="1.5" fill="rgb(227,158,51)" fill-opacity="0.5" stroke="rgb(227,158,51)" stroke-opacity="0.9" stroke-width="0.55"/>
<circle cx="518.4" cy="340.6" r="1.5" fill="rgb(226,153,52)" fill-opacity="0.5" stroke="rgb(226,153,52)" stroke-opacity="0.9" stroke-width="0.55"/>
<circle cx="524.6" cy="338.1" r="1.5" fill="rgb(226,158,51)" fill-opacity="0.5" stroke="rgb(226,158,51)" stroke-opacity="0.9" stroke-width="0.55"/>
<circle cx="524.6" cy="345.9" r="1.5" fill="rgb(225,142,53)" fill-opacity="0.5" stroke="rgb(225,142,53)" stroke-opacity="0.9" stroke-width="0.55"/>
<circle cx="527.5" cy="331.6" r="1.5" fill="rgb(228,171,48)" fill-opacity="0.5" stroke="rgb(228,171,48)" stroke-opacity="0.9" stroke-width="0.55"/>
<circle cx="530.6" cy="333.3" r="1.5" fill="rgb(228,167,49)" fill-opacity="0.5" stroke="rgb(228,167,49)" stroke-opacity="0.9" stroke-width="0.55"/>
<circle cx="538.4" cy="336.1" r="1.5" fill="rgb(227,162,50)" fill-opacity="0.5" stroke="rgb(227,162,50)" stroke-opacity="0.9" stroke-width="0.55"/>
<circle cx="538.4" cy="341.3" r="1.5" fill="rgb(226,151,52)" fill-opacity="0.5" stroke="rgb(226,151,52)" stroke-opacity="0.9" stroke-width="0.55"/>
<circle cx="544.7" cy="333.2" r="1.5" fill="rgb(228,168,49)" fill-opacity="0.5" stroke="rgb(228,168,49)" stroke-opacity="0.9" stroke-width="0.55"/>
<circle cx="544.7" cy="338.2" r="1.5" fill="rgb(226,158,51)" fill-opacity="0.5" stroke="rgb(226,158,51)" stroke-opacity="0.9" stroke-width="0.55"/>
<circle cx="547.9" cy="332.2" r="1.5" fill="rgb(228,170,48)" fill-opacity="0.5" stroke="rgb(228,170,48)" stroke-opacity="0.9" stroke-width="0.55"/>
<circle cx="553.7" cy="331.1" r="1.5" fill="rgb(228,172,48)" fill-opacity="0.5" stroke="rgb(228,172,48)" stroke-opacity="0.9" stroke-width="0.55"/>
<circle cx="562.5" cy="331.7" r="1.5" fill="rgb(228,171,48)" fill-opacity="0.5" stroke="rgb(228,171,48)" stroke-opacity="0.9" stroke-width="0.55"/>
<circle cx="570.4" cy="335.1" r="1.5" fill="rgb(227,164,50)" fill-opacity="0.5" stroke="rgb(227,164,50)" stroke-opacity="0.9" stroke-width="0.55"/>
<circle cx="580.5" cy="328" r="1.5" fill="rgb(227,179,48)" fill-opacity="0.5" stroke="rgb(227,179,48)" stroke-opacity="0.9" stroke-width="0.55"/>
<circle cx="587.3" cy="327.3" r="1.5" fill="rgb(227,181,48)" fill-opacity="0.5" stroke="rgb(227,181,48)" stroke-opacity="0.9" stroke-width="0.55"/>
<circle cx="595.4" cy="331" r="1.5" fill="rgb(228,172,48)" fill-opacity="0.5" stroke="rgb(228,172,48)" stroke-opacity="0.9" stroke-width="0.55"/>
<circle cx="602.2" cy="334.4" r="1.5" fill="rgb(227,165,49)" fill-opacity="0.5" stroke="rgb(227,165,49)" stroke-opacity="0.9" stroke-width="0.55"/>
<circle cx="608.7" cy="338.8" r="1.5" fill="rgb(226,156,51)" fill-opacity="0.5" stroke="rgb(226,156,51)" stroke-opacity="0.9" stroke-width="0.55"/>
<circle cx="613.4" cy="325.7" r="1.5" fill="rgb(226,184,48)" fill-opacity="0.5" stroke="rgb(226,184,48)" stroke-opacity="0.9" stroke-width="0.55"/>
<circle cx="622.4" cy="331" r="1.5" fill="rgb(228,172,48)" fill-opacity="0.5" stroke="rgb(228,172,48)" stroke-opacity="0.9" stroke-width="0.55"/>
<circle cx="627.6" cy="327.4" r="1.5" fill="rgb(227,180,48)" fill-opacity="0.5" stroke="rgb(227,180,48)" stroke-opacity="0.9" stroke-width="0.55"/>
<circle cx="638.2" cy="338.8" r="1.5" fill="rgb(226,156,51)" fill-opacity="0.5" stroke="rgb(226,156,51)" stroke-opacity="0.9" stroke-width="0.55"/>
<circle cx="643.5" cy="343.2" r="1.5" fill="rgb(225,148,53)" fill-opacity="0.5" stroke="rgb(225,148,53)" stroke-opacity="0.9" stroke-width="0.55"/>
<circle cx="646.3" cy="350.8" r="1.5" fill="rgb(223,132,55)" fill-opacity="0.5" stroke="rgb(223,132,55)" stroke-opacity="0.9" stroke-width="0.55"/>
<circle cx="655.3" cy="352.5" r="1.5" fill="rgb(222,128,55)" fill-opacity="0.5" stroke="rgb(222,128,55)" stroke-opacity="0.9" stroke-width="0.55"/>
<circle cx="658" cy="349.4" r="1.5" fill="rgb(223,135,54)" fill-opacity="0.5" stroke="rgb(223,135,54)" stroke-opacity="0.9" stroke-width="0.55"/>
<circle cx="666.7" cy="352.5" r="1.5" fill="rgb(222,128,55)" fill-opacity="0.5" stroke="rgb(222,128,55)" stroke-opacity="0.9" stroke-width="0.55"/>
<circle cx="672.2" cy="348.7" r="1.5" fill="rgb(224,136,54)" fill-opacity="0.5" stroke="rgb(224,136,54)" stroke-opacity="0.9" stroke-width="0.55"/>
<circle cx="672.2" cy="353.3" r="1.5" fill="rgb(221,126,55)" fill-opacity="0.5" stroke="rgb(221,126,55)" stroke-opacity="0.9" stroke-width="0.55"/>
<circle cx="687" cy="348.8" r="1.5" fill="rgb(224,136,54)" fill-opacity="0.5" stroke="rgb(224,136,54)" stroke-opacity="0.9" stroke-width="0.55"/>
<circle cx="701.8" cy="356.3" r="1.5" fill="rgb(220,119,56)" fill-opacity="0.5" stroke="rgb(220,119,56)" stroke-opacity="0.9" stroke-width="0.55"/>
<circle cx="715.1" cy="348.4" r="1.5" fill="rgb(224,137,54)" fill-opacity="0.5" stroke="rgb(224,137,54)" stroke-opacity="0.9" stroke-width="0.55"/>
<circle cx="727.9" cy="355.6" r="1.5" fill="rgb(220,121,56)" fill-opacity="0.5" stroke="rgb(220,121,56)" stroke-opacity="0.9" stroke-width="0.55"/>
<circle cx="735.6" cy="355" r="1.5" fill="rgb(220,122,56)" fill-opacity="0.5" stroke="rgb(220,122,56)" stroke-opacity="0.9" stroke-width="0.55"/>
<circle cx="739.3" cy="352.8" r="1.5" fill="rgb(222,127,55)" fill-opacity="0.5" stroke="rgb(222,127,55)" stroke-opacity="0.9" stroke-width="0.55"/>
<circle cx="748.3" cy="349.1" r="1.5" fill="rgb(223,136,54)" fill-opacity="0.5" stroke="rgb(223,136,54)" stroke-opacity="0.9" stroke-width="0.55"/>
<circle cx="748.3" cy="353.2" r="1.5" fill="rgb(221,126,55)" fill-opacity="0.5" stroke="rgb(221,126,55)" stroke-opacity="0.9" stroke-width="0.55"/>
<circle cx="757" cy="358.1" r="1.5" fill="rgb(219,116,56)" fill-opacity="0.5" stroke="rgb(219,116,56)" stroke-opacity="0.9" stroke-width="0.55"/>
<circle cx="765" cy="363.7" r="1.5" fill="rgb(216,106,57)" fill-opacity="0.5" stroke="rgb(216,106,57)" stroke-opacity="0.9" stroke-width="0.55"/>
<circle cx="768.5" cy="365.5" r="1.5" fill="rgb(215,103,58)" fill-opacity="0.5" stroke="rgb(215,103,58)" stroke-opacity="0.9" stroke-width="0.55"/>
<circle cx="771.3" cy="367.9" r="1.5" fill="rgb(214,100,58)" fill-opacity="0.5" stroke="rgb(214,100,58)" stroke-opacity="0.9" stroke-width="0.55"/>
<circle cx="778.3" cy="357.5" r="1.5" fill="rgb(219,117,56)" fill-opacity="0.5" stroke="rgb(219,117,56)" stroke-opacity="0.9" stroke-width="0.55"/>
<circle cx="781.8" cy="365.4" r="1.5" fill="rgb(215,103,58)" fill-opacity="0.5" stroke="rgb(215,103,58)" stroke-opacity="0.9" stroke-width="0.55"/>
<circle cx="786.6" cy="365.4" r="1.5" fill="rgb(215,103,58)" fill-opacity="0.5" stroke="rgb(215,103,58)" stroke-opacity="0.9" stroke-width="0.55"/>
</g>
<path d="M33.2 322.8L56.6 311.8L81 305.8L97.9 312.1L113.9 300.4L133.1 310.6L165.6 312.05L188.5 311.8L219.5 310.6L270.2 322.8L295.3 324.3L316.6 333.2L375.7 333.2L392.7 343.7L413.3 343.9L430.3 331.3L442.8 327.6L459.1 325.8L473.4 322.6L515.1 338.4L538 338.5L544.4 333.6L587.4 329.6L602.2 333.3L622.1 328.2L638.3 347.7L658.3 350.9L706.9 349.2L735.7 352.1L748.2 361.3L764.4 363.8L768.8 365.2L788 365.2" fill="none" stroke="#c2172a" stroke-width="1.3" stroke-linejoin="round"/>
</svg>
</main>
</div>
</body>
</html>
